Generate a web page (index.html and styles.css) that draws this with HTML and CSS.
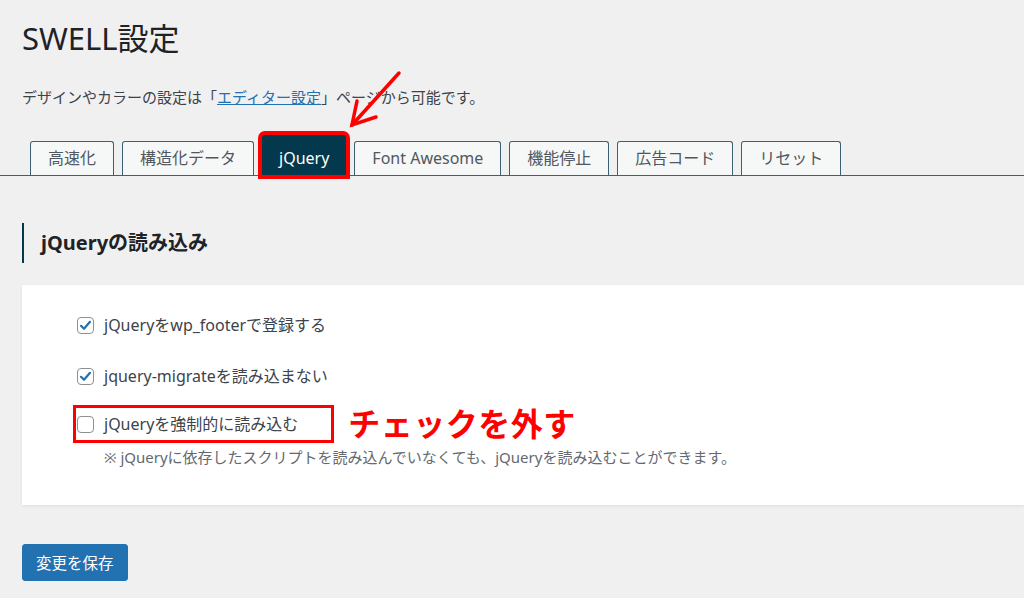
FILE: index.html
```html
<!DOCTYPE html>
<html lang="ja">
<head>
    <meta charset="UTF-8">
    <meta name="viewport" content="width=device-width, initial-scale=1.0">
    <title>SWELL設定</title>
    <link rel="stylesheet" href="styles.css">
</head>
<body>
    <div class="page">
        <div class="page-head">
            <h1 class="page-title">SWELL設定</h1>
            <p class="page-desc">デザインやカラーの設定は「<a href="#">エディター設定</a>」ページから可能です。</p>
        </div>

        <nav class="tabs">
            <a class="tab" href="#">高速化</a>
            <a class="tab" href="#">構造化データ</a>
            <a class="tab is-active" href="#">jQuery</a>
            <a class="tab" href="#">Font Awesome</a>
            <a class="tab" href="#">機能停止</a>
            <a class="tab" href="#">広告コード</a>
            <a class="tab" href="#">リセット</a>
        </nav>

        <main class="content">
            <h2 class="section-title">jQueryの読み込み</h2>

            <div class="panel">
                <div class="field field-first">
                    <label class="check">
                        <span class="check-box is-checked">
                            <svg width="13" height="13" viewBox="0 0 13 13"><path d="M2 6.8l3 3 6-7" fill="none" stroke="#2271b1" stroke-width="2.2" stroke-linecap="round" stroke-linejoin="round"/></svg>
                        </span>
                        jQueryをwp_footerで登録する
                    </label>
                </div>
                <div class="field field-second">
                    <label class="check">
                        <span class="check-box is-checked">
                            <svg width="13" height="13" viewBox="0 0 13 13"><path d="M2 6.8l3 3 6-7" fill="none" stroke="#2271b1" stroke-width="2.2" stroke-linecap="round" stroke-linejoin="round"/></svg>
                        </span>
                        jquery-migrateを読み込まない
                    </label>
                </div>
                <div class="field field-third">
                    <label class="check check-marked">
                        <span class="check-box"></span>
                        jQueryを強制的に読み込む
                    </label>
                    <span class="note-red">チェックを外す</span>
                </div>
                <p class="field-help">※ jQueryに依存したスクリプトを読み込んでいなくても、jQueryを読み込むことができます。</p>
            </div>

            <button class="save-button">変更を保存</button>
        </main>

        <!-- annotation arrow -->
        <svg class="arrow" width="70" height="70" viewBox="0 0 70 70">
            <path d="M59 8L12 60" fill="none" stroke="#ff0000" stroke-width="3.5" stroke-linecap="round"/>
            <path d="M17 36L12 60 36 52" fill="none" stroke="#ff0000" stroke-width="3.5" stroke-linecap="round" stroke-linejoin="miter"/>
        </svg>
    </div>
</body>
</html>
```

FILE: styles.css
```css
* {
    margin: 0;
    padding: 0;
    box-sizing: border-box;
}

body {
    font-family: "Noto Sans", "Noto Sans CJK JP", sans-serif;
    background-color: #f0f0f1;
    color: #3c434a;
    overflow: hidden;
}

.page {
    position: relative;
    min-height: 598px;
}

.page-head {
    padding: 17px 0 0 22px;
}

.page-title {
    font-size: 31px;
    line-height: 42px;
    font-weight: 400;
    color: #1d2327;
}

.page-desc {
    margin-top: 26px;
    font-size: 15px;
    line-height: 24px;
}

.page-desc a {
    color: #2271b1;
}

.tabs {
    margin-top: 26px;
    padding-left: 30px;
    display: flex;
    align-items: flex-end;
    gap: 8px;
    border-bottom: 1px solid #3c6175;
}

.tab {
    height: 34px;
    line-height: 32px;
    padding: 0 17px;
    font-size: 16px;
    color: #50575e;
    text-decoration: none;
    background-color: #f6f7f7;
    border: 1px solid #3c6175;
    border-bottom: none;
    border-radius: 3px 3px 0 0;
}

.tab.is-active {
    height: 40px;
    line-height: 40px;
    padding: 2px 16px 0;
    color: #fff;
    background-color: #04384c;
    border-color: #04384c;
    box-shadow: 0 0 0 4px #ff0000;
}

.content {
    padding-left: 22px;
}

.section-title {
    margin-top: 47px;
    height: 40px;
    line-height: 40px;
    padding-left: 17px;
    border-left: 2px solid #04384c;
    font-size: 20px;
    font-weight: 700;
    color: #1d2327;
}

.panel {
    margin-top: 22px;
    padding: 28px 0 37px 55px;
    background-color: #fff;
    box-shadow: 0 1px 3px rgba(0, 0, 0, 0.08);
}

.field {
    display: flex;
    align-items: center;
}

.field-second {
    margin-top: 27px;
}

.field-third {
    margin-top: 20px;
}

.check {
    display: inline-flex;
    align-items: center;
    gap: 10px;
    font-size: 16px;
    line-height: 24px;
    color: #3c434a;
}

.check-box {
    width: 17px;
    height: 17px;
    border: 1px solid #8c8f94;
    border-radius: 4px;
    background-color: #fff;
    display: flex;
    align-items: center;
    justify-content: center;
}

.check-marked {
    margin-left: -1px;
    padding: 4px 33px 4px 1px;
    box-shadow: 0 0 0 3px #ff0000;
}

.note-red {
    margin-left: 17px;
    font-size: 32px;
    line-height: 32px;
    font-weight: 700;
    color: #ff0000;
    letter-spacing: 0.5px;
}

.field-help {
    margin: 6px 0 0 27px;
    font-size: 15px;
    line-height: 22px;
    color: #646970;
}

.save-button {
    margin-top: 39px;
    height: 37px;
    padding: 0 13px;
    font-family: inherit;
    font-size: 15.5px;
    color: #fff;
    background-color: #2271b1;
    border: 1px solid #2271b1;
    border-radius: 3px;
    cursor: pointer;
}

.arrow {
    position: absolute;
    left: 340px;
    top: 65px;
}
```
